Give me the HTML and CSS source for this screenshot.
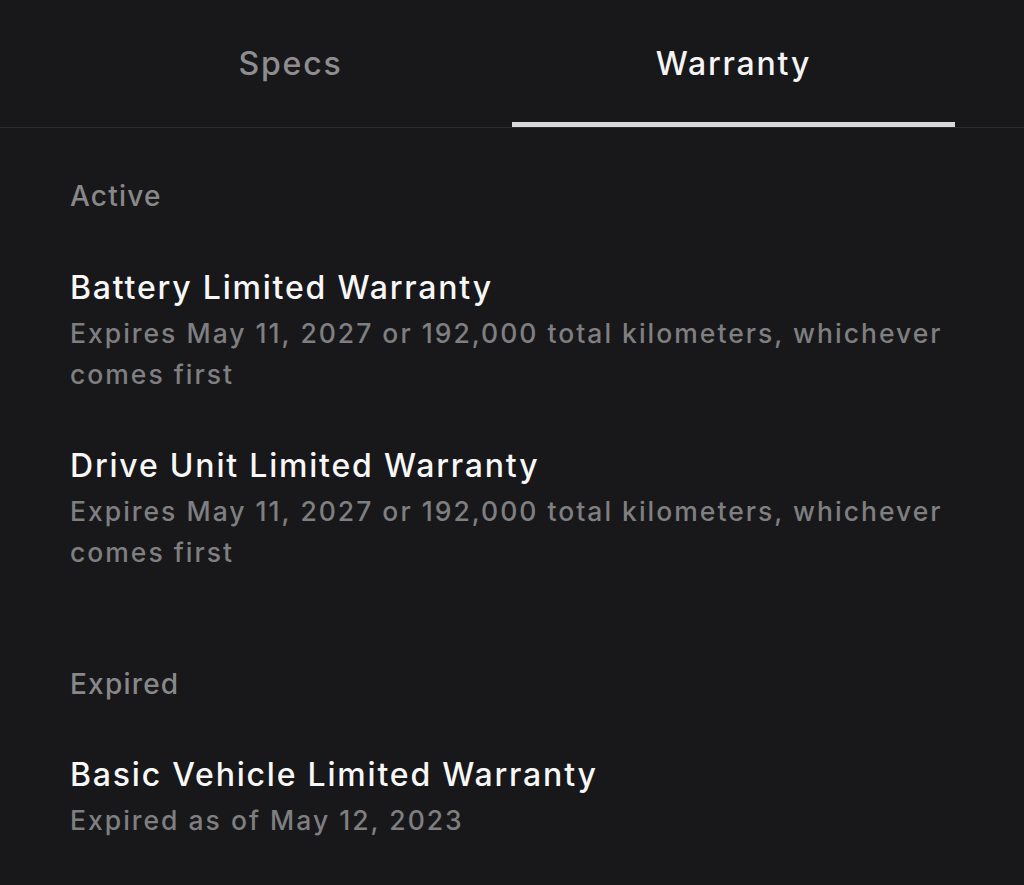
FILE: index.html
```html
<!DOCTYPE html>
<html>
<head>
<meta charset="utf-8">
<link rel="stylesheet" href="styles.css">
</head>
<body>
<div class="tabbar">
  <div class="tabs">
    <div class="tab">Specs</div>
    <div class="tab active">Warranty</div>
  </div>
</div>
<div class="content">
  <div class="section">
    <div class="section-title">Active</div>
    <div class="item">
      <div class="item-title">Battery Limited Warranty</div>
      <div class="item-sub">Expires May 11, 2027 or 192,000 total kilometers, whichever comes first</div>
    </div>
    <div class="item">
      <div class="item-title">Drive Unit Limited Warranty</div>
      <div class="item-sub">Expires May 11, 2027 or 192,000 total kilometers, whichever comes first</div>
    </div>
  </div>
  <div class="section expired">
    <div class="section-title">Expired</div>
    <div class="item">
      <div class="item-title">Basic Vehicle Limited Warranty</div>
      <div class="item-sub">Expired as of May 12, 2023</div>
    </div>
  </div>
</div>
</body>
</html>
```
FILE: styles.css
```css
html, body {
  margin: 0;
  padding: 0;
  background: #18181a;
  font-family: Inter, "Open Sans", sans-serif;
  -webkit-font-smoothing: antialiased;
}
.tabbar {
  border-bottom: 1px solid #2c2c2e;
}
.tabs {
  display: grid;
  grid-template-columns: 1fr 1fr;
  margin: 0 69px;
}
.tab {
  position: relative;
  height: 127px;
  box-sizing: border-box;
  padding-top: 44px;
  text-align: center;
  font-size: 32px;
  font-weight: 500;
  letter-spacing: 1.8px;
  color: #8e8e90;
  line-height: 40px;
}
.tab.active {
  color: #f4f4f4;
}
.tab.active::after {
  content: "";
  position: absolute;
  left: 0;
  right: 0;
  bottom: 0;
  height: 5px;
  background: #d9d9d9;
}
.content {
  padding: 50px 70px 0;
  width: 890px;
}
.section-title {
  font-size: 28px;
  font-weight: 500;
  letter-spacing: 1.2px;
  color: #88888a;
  line-height: 36px;
}
.item {
  margin-top: 54px;
}
.item + .item {
  margin-top: 51px;
}
.expired .item {
  margin-top: 53px;
}
.item-title {
  font-size: 32px;
  font-weight: 500;
  letter-spacing: 1.8px;
  color: #f7f7f7;
  line-height: 40px;
}
.item-sub {
  font-size: 26.5px;
  font-weight: 500;
  letter-spacing: 2px;
  color: #7f7f81;
  line-height: 41px;
  margin-top: 5px;
}
.section.expired {
  margin-top: 93px;
}
```
